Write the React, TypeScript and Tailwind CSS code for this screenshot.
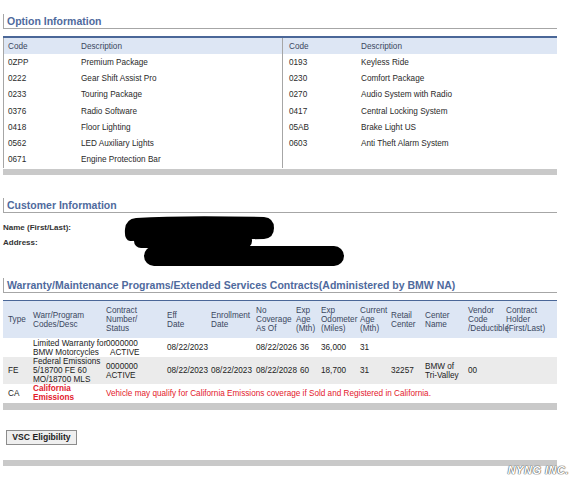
import React from "react";

const leftOptions = [
  ["0ZPP", "Premium Package"],
  ["0222", "Gear Shift Assist Pro"],
  ["0233", "Touring Package"],
  ["0376", "Radio Software"],
  ["0418", "Floor Lighting"],
  ["0562", "LED Auxiliary Lights"],
  ["0671", "Engine Protection Bar"],
];

const rightOptions = [
  ["0193", "Keyless Ride"],
  ["0230", "Comfort Package"],
  ["0270", "Audio System with Radio"],
  ["0417", "Central Locking System"],
  ["05AB", "Brake Light US"],
  ["0603", "Anti Theft Alarm System"],
  ["", ""],
];

const cols = "grid-cols-[28px_73px_61px_44px_45px_40px_25px_39px_31px_34px_43px_38px_53px]";

const headers = [
  ["Type"],
  ["Warr/Program", "Codes/Desc"],
  ["Contract", "Number/", "Status"],
  ["Eff", "Date"],
  ["Enrollment", "Date"],
  ["No", "Coverage", "As Of"],
  ["Exp", "Age", "(Mth)"],
  ["Exp", "Odometer", "(Miles)"],
  ["Current", "Age", "(Mth)"],
  ["Retail", "Center"],
  ["Center", "Name"],
  ["Vendor", "Code", "/Deductible"],
  ["Contract", "Holder", "(First/Last)"],
];

function Heading({ title }: { title: string }) {
  return (
    <div className="h-[15px] border-l border-b border-[#a6a6a6] pl-[3px] text-[10.5px] font-bold leading-[14px] text-[#4f6a9d] whitespace-nowrap">
      {title}
    </div>
  );
}

function Lines({ lines }: { lines: string[] }) {
  return (
    <div className="flex flex-col whitespace-nowrap">
      {lines.map((l, i) => (
        <span key={i}>{l}</span>
      ))}
    </div>
  );
}

function OptionColumn({ rows, bordered, codeW }: { rows: string[][]; bordered: boolean; codeW: string }) {
  return (
    <div className={bordered ? "w-[280px] border-l border-r border-[#a6a6a6]" : "w-[274px]"}>
      <div className={`flex h-[16px] items-center bg-[#dde6f4] text-[#3b4760] ${bordered ? "pl-[4px]" : "pl-[6px]"}`}>
        <span className={codeW}>Code</span>
        <span>Description</span>
      </div>
      {rows.map(([c, d], i) => (
        <div key={i} className={`flex h-[16.3px] items-center text-[#2a2a2a] ${bordered ? "pl-[4px]" : "pl-[6px]"}`}>
          <span className={codeW}>{c}</span>
          <span>{d}</span>
        </div>
      ))}
    </div>
  );
}

export default function App() {
  return (
    <div className="relative h-[480px] w-[571px] overflow-hidden bg-white font-['Liberation_Sans',Arial,sans-serif]">
      <div className="w-[557px] pl-[3px] pt-[14px] text-[8.2px] leading-[9px]">
        {/* Option Information */}
        <Heading title="Option Information" />
        <div className="mt-[7px] border-t-2 border-[#4a6798]">
          <div className="flex">
            <OptionColumn rows={leftOptions} bordered codeW="w-[73px]" />
            <OptionColumn rows={rightOptions} bordered={false} codeW="w-[72px]" />
          </div>
          <div className="mt-[1px] h-[6px] bg-[#c9c9c9]" />
        </div>

        {/* Customer Information */}
        <div className="mt-[23px]">
          <Heading title="Customer Information" />
        </div>
        <div className="relative h-[65px] pt-[7px] text-[8px] font-bold leading-[15px] text-[#333]">
          <div>Name (First/Last):</div>
          <div>Address:</div>
          <svg className="absolute left-[119px] top-[2px]" width="230" height="54" viewBox="0 0 230 54">
            <path d="M14 3 Q60 0 142 2 Q152 3 152 13 Q152 23 142 24 L8 26 Q2 25 3 14 Q4 4 14 3 Z" fill="#000" />
            <rect x="12" y="18" width="118" height="15" rx="7" fill="#000" />
            <rect x="22" y="31" width="200" height="20" rx="10" fill="#000" />
          </svg>
        </div>

        {/* Warranty */}
        <Heading title="Warranty/Maintenance Programs/Extended Services Contracts(Administered by BMW NA)" />
        <div className="mt-[7px] border-t-[1.5px] border-[#4a6798]">
          <div className={`grid h-[37px] ${cols} items-center bg-[#dde6f4] text-[#3b4760]`}>
            {headers.map((h, i) => (
              <div key={i} className={i === 0 ? "pl-[5px]" : "pl-[2px]"}>
                <Lines lines={h} />
              </div>
            ))}
          </div>
          <div className={`grid h-[19px] ${cols} items-center text-[#222]`}>
            <div />
            <div className="pl-[2px]"><Lines lines={["Limited Warranty for", "BMW Motorcycles"]} /></div>
            <div className="pl-[2px]">
              <div className="flex flex-col whitespace-nowrap">
                <span>0000000</span>
                <span className="pl-[4px]">ACTIVE</span>
              </div>
            </div>
            <div className="pl-[2px] whitespace-nowrap">08/22/2023</div>
            <div />
            <div className="pl-[2px] whitespace-nowrap">08/22/2026</div>
            <div className="pl-[6px]">36</div>
            <div className="pl-[2px]">36,000</div>
            <div className="pl-[2px]">31</div>
            <div />
            <div />
            <div />
            <div />
          </div>
          <div className={`grid h-[27px] ${cols} items-center bg-[#ebebeb] text-[#222]`}>
            <div className="pl-[5px]">FE</div>
            <div className="pl-[2px]"><Lines lines={["Federal Emissions", "5/18700 FE 60", "MO/18700 MLS"]} /></div>
            <div className="pl-[2px]"><Lines lines={["0000000", "ACTIVE"]} /></div>
            <div className="pl-[2px] whitespace-nowrap">08/22/2023</div>
            <div className="pl-[2px] whitespace-nowrap">08/22/2023</div>
            <div className="pl-[2px] whitespace-nowrap">08/22/2028</div>
            <div className="pl-[6px]">60</div>
            <div className="pl-[2px]">18,700</div>
            <div className="pl-[2px]">31</div>
            <div className="pl-[2px]">32257</div>
            <div className="pl-[2px]"><Lines lines={["BMW of", "Tri-Valley"]} /></div>
            <div className="pl-[2px]">00</div>
            <div />
          </div>
          <div className="grid h-[18px] grid-cols-[28px_73px_453px] items-center">
            <div className="pl-[5px] text-[#222]">CA</div>
            <div className="pl-[2px] font-bold text-[#e3202c]"><Lines lines={["California", "Emissions"]} /></div>
            <div className="pl-[2px] whitespace-nowrap text-[#e3202c]">
              Vehicle may qualify for California Emissions coverage if Sold and Registered in California.
            </div>
          </div>
          <div className="mt-[1px] h-[7px] bg-[#c9c9c9]" />
        </div>

        {/* Button */}
        <div className="mt-[20px] pl-[3px]">
          <button className="h-[15px] w-[71px] border border-[#8c8c8c] bg-[#efefef] text-[8.6px] font-bold leading-[13px] text-[#222]">
            VSC Eligibility
          </button>
        </div>
        <div className="mt-[15px] h-[6px] bg-[#c9c9c9]" />
      </div>

      <div className="absolute right-[2px] top-[462px] text-[11px] font-bold italic tracking-[0.5px] text-white [text-shadow:0_0_1px_#555,0_0_1px_#555,0_0_1px_#555]">
        NYNG INC.
      </div>
    </div>
  );
}
